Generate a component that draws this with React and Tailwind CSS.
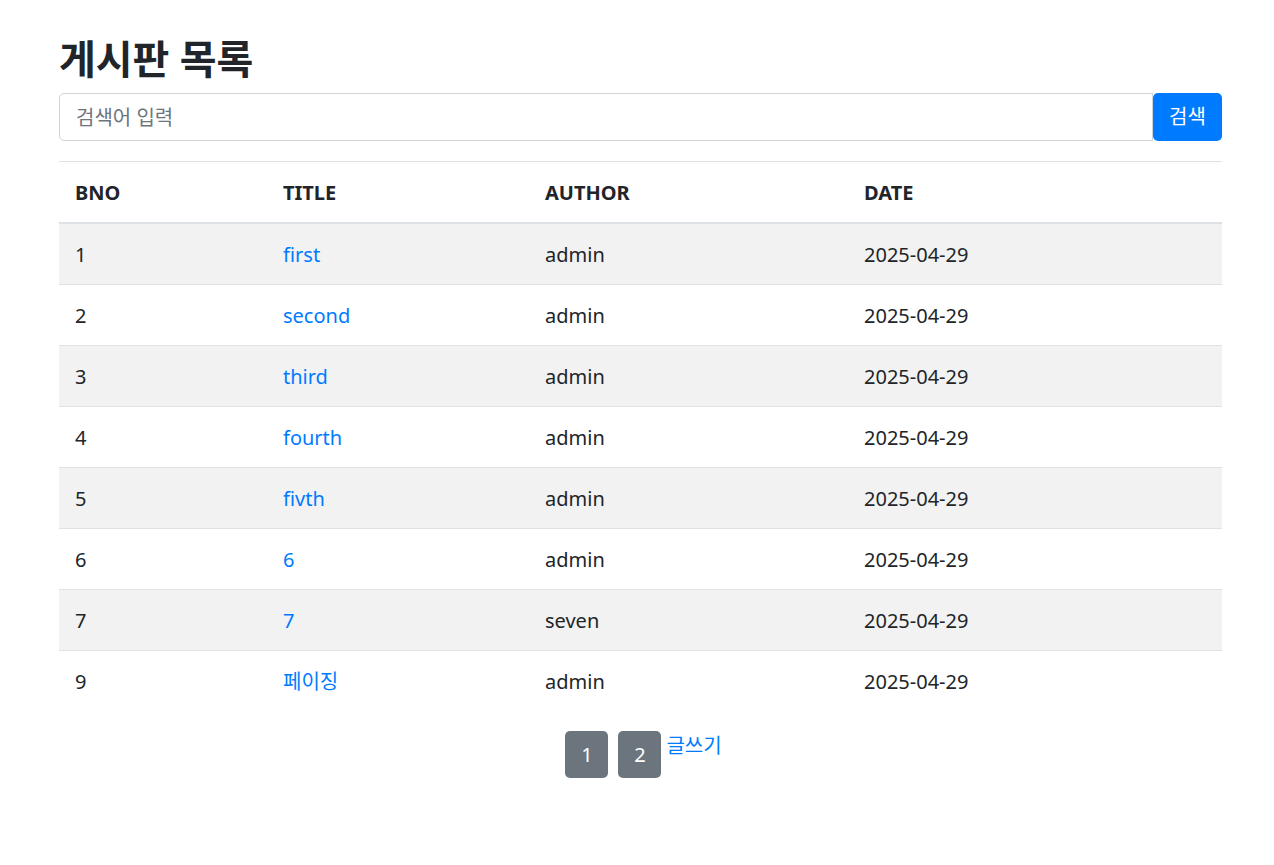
const rows = [
    { bno: 1, title: "first", author: "admin", date: "2025-04-29" },
    { bno: 2, title: "second", author: "admin", date: "2025-04-29" },
    { bno: 3, title: "third", author: "admin", date: "2025-04-29" },
    { bno: 4, title: "fourth", author: "admin", date: "2025-04-29" },
    { bno: 5, title: "fivth", author: "admin", date: "2025-04-29" },
    { bno: 6, title: "6", author: "admin", date: "2025-04-29" },
    { bno: 7, title: "7", author: "seven", date: "2025-04-29" },
    { bno: 9, title: "페이징", author: "admin", date: "2025-04-29" },
];

export default function App() {
    return (
        <div
            className="min-h-screen bg-white text-[#212529] text-[20px] leading-[30px]"
            style={{ fontFamily: '"Noto Sans", "Noto Sans CJK KR", sans-serif' }}
        >
            <div className="ml-[59px] w-[1163px] pt-[35px]">
                {/* Title */}
                <h2 className="text-[40px] leading-[48px] font-bold mb-[10px]">게시판 목록</h2>

                {/* Search */}
                <form className="flex mb-[20px]" onSubmit={(e) => e.preventDefault()}>
                    <input
                        type="text"
                        placeholder="검색어 입력"
                        className="flex-1 h-[48px] px-[16px] border border-[#ced4da] rounded-l-[5px] text-[20px] placeholder:text-[#6c757d] outline-none"
                    />
                    <button className="w-[69px] h-[48px] bg-[#007bff] text-white rounded-[5px] text-[20px]">검색</button>
                </form>

                {/* Table */}
                <table className="w-full border-collapse">
                    <thead>
                        <tr className="text-left">
                            <th className="w-[208px] px-[16px] pt-[16px] pb-[14px] border-t border-b-2 border-[#dee2e6] font-bold">BNO</th>
                            <th className="w-[262px] px-[16px] pt-[16px] pb-[14px] border-t border-b-2 border-[#dee2e6] font-bold">TITLE</th>
                            <th className="w-[319px] px-[16px] pt-[16px] pb-[14px] border-t border-b-2 border-[#dee2e6] font-bold">AUTHOR</th>
                            <th className="px-[16px] pt-[16px] pb-[14px] border-t border-b-2 border-[#dee2e6] font-bold">DATE</th>
                        </tr>
                    </thead>
                    <tbody>
                        {rows.map((r, i) => (
                            <tr key={r.bno} className={i % 2 === 0 ? "bg-[#f2f2f2]" : "bg-white"}>
                                <td className="px-[16px] pt-[16px] pb-[14px] border-t border-[#dee2e6]">{r.bno}</td>
                                <td className="px-[16px] pt-[16px] pb-[14px] border-t border-[#dee2e6]">
                                    <a href="#" className="text-[#007bff]">{r.title}</a>
                                </td>
                                <td className="px-[16px] pt-[16px] pb-[14px] border-t border-[#dee2e6]">{r.author}</td>
                                <td className="px-[16px] pt-[16px] pb-[14px] border-t border-[#dee2e6]">{r.date}</td>
                            </tr>
                        ))}
                    </tbody>
                </table>

                {/* Paging */}
                <div className="flex justify-center items-start mt-[20px] pl-[6px]">
                    <button className="w-[43px] h-[47px] bg-[#6c757d] text-white rounded-[5px] pt-[1px]">1</button>
                    <button className="w-[43px] h-[47px] bg-[#6c757d] text-white rounded-[5px] pt-[1px] ml-[10px]">2</button>
                    <a href="#" className="text-[#007bff] ml-[5px] leading-[30px]">글쓰기</a>
                </div>
            </div>
        </div>
    );
}
